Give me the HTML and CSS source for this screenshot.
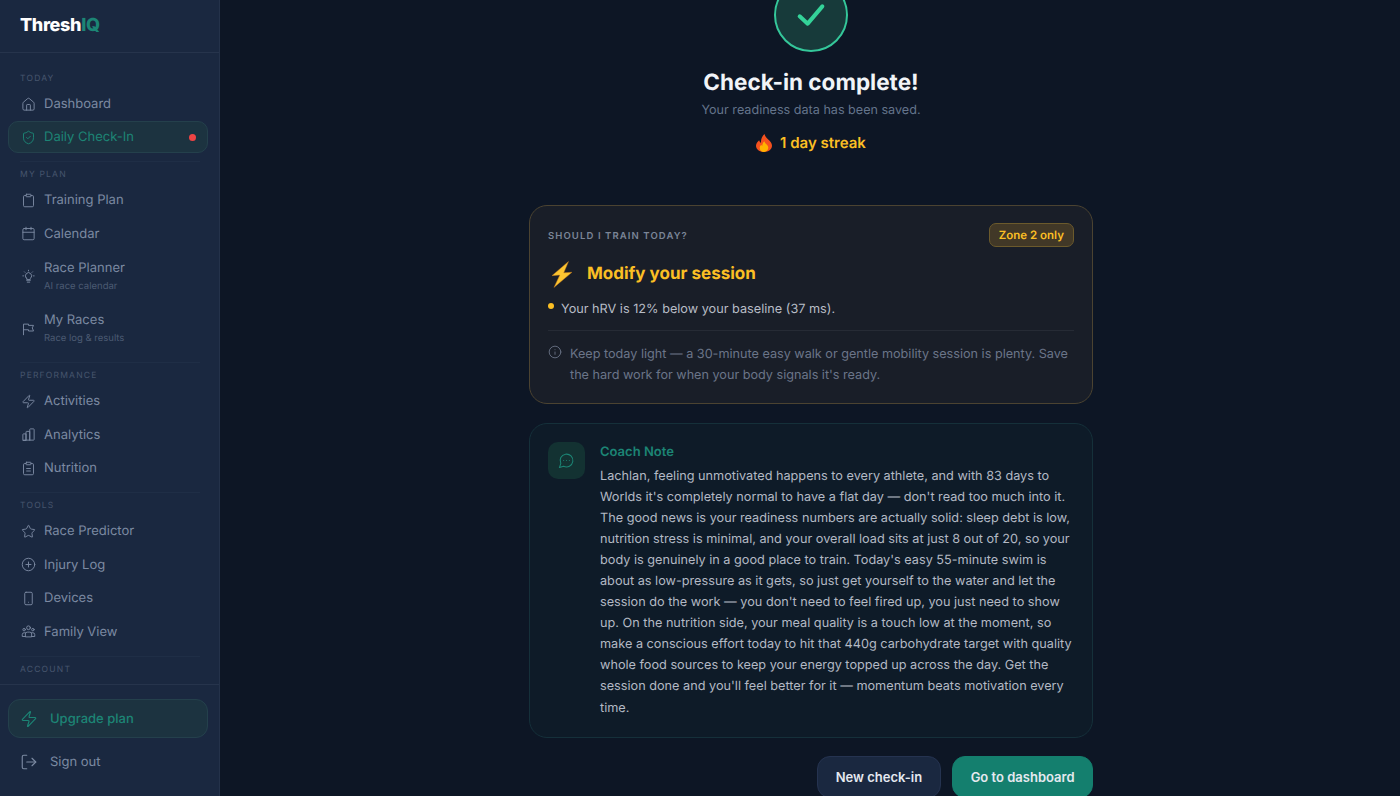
FILE: index.html

```html
<!DOCTYPE html>
<html lang="en">
<head>
  <meta charset="UTF-8" />
  <meta name="viewport" content="width=device-width, initial-scale=1" />
  <title>ThreshIQ - Daily Check-In</title>
  <link rel="stylesheet" href="styles.css">
</head>
<body>
  <div class="app">
    <aside class="sidebar">
      <div class="brand">Thresh<span>IQ</span></div>

      <nav class="nav">
        <div class="nav-section">
          <div class="nav-label">TODAY</div>
          <a class="nav-item">
            <svg class="icon" viewBox="0 0 24 24"><path d="M15 21v-8a1 1 0 0 0-1-1h-4a1 1 0 0 0-1 1v8"/><path d="M3 10a2 2 0 0 1 .709-1.528l7-5.999a2 2 0 0 1 2.582 0l7 5.999A2 2 0 0 1 21 10v9a2 2 0 0 1-2 2H5a2 2 0 0 1-2-2z"/></svg>
            <span>Dashboard</span>
          </a>
          <a class="nav-item active">
            <svg class="icon" viewBox="0 0 24 24"><path d="M20 13c0 5-3.5 7.5-7.66 8.95a1 1 0 0 1-.67-.01C7.5 20.5 4 18 4 13V6a1 1 0 0 1 1-1c2 0 4.5-1.2 6.24-2.72a1.17 1.17 0 0 1 1.52 0C14.51 3.81 17 5 19 5a1 1 0 0 1 1 1z"/><path d="m9 12 2 2 4-4"/></svg>
            <span>Daily Check-In</span>
            <i class="dot"></i>
          </a>
        </div>

        <div class="nav-section">
          <div class="nav-label">MY PLAN</div>
          <a class="nav-item">
            <svg class="icon" viewBox="0 0 24 24"><rect x="8" y="2" width="8" height="4" rx="1"/><path d="M16 4h2a2 2 0 0 1 2 2v14a2 2 0 0 1-2 2H6a2 2 0 0 1-2-2V6a2 2 0 0 1 2-2h2"/></svg>
            <span>Training Plan</span>
          </a>
          <a class="nav-item">
            <svg class="icon" viewBox="0 0 24 24"><path d="M8 2v4"/><path d="M16 2v4"/><rect x="3" y="4" width="18" height="18" rx="2"/><path d="M3 10h18"/></svg>
            <span>Calendar</span>
          </a>
          <a class="nav-item tall">
            <svg class="icon" viewBox="0 0 24 24"><path d="M9 18h6"/><path d="M10 21h4"/><path d="M8.500 14.500a5 5 0 1 1 7 0c-.7.7-1 1.400-1 2.500h-5c0-1.100-.3-1.800-1-2.500z"/><path d="M12 2v1"/><path d="M3 11h1"/><path d="M20 11h1"/><path d="m5.600 4.600.7.7"/><path d="m18.400 4.600-.7.7"/></svg>
            <span class="nav-text">Race Planner<small>AI race calendar</small></span>
          </a>
          <a class="nav-item tall">
            <svg class="icon" viewBox="0 0 24 24"><path d="M4 22V5h8v2h8l-2 4 2 5h-8v-2H4"/></svg>
            <span class="nav-text">My Races<small>Race log &amp; results</small></span>
          </a>
        </div>

        <div class="nav-section">
          <div class="nav-label">PERFORMANCE</div>
          <a class="nav-item">
            <svg class="icon" viewBox="0 0 24 24"><path d="M4 14a1 1 0 0 1-.78-1.630l9.900-10.200a.5.5 0 0 1 .86.46l-1.920 6.020A1 1 0 0 0 13 10h7a1 1 0 0 1 .78 1.630l-9.900 10.200a.5.5 0 0 1-.86-.46l1.920-6.020A1 1 0 0 0 11 14z"/></svg>
            <span>Activities</span>
          </a>
          <a class="nav-item">
            <svg class="icon" viewBox="0 0 24 24"><path d="M3 21v-9a1 1 0 0 1 1-1h4v10z"/><path d="M8 21V8a1 1 0 0 1 1-1h5v14"/><path d="M14 21V4a1 1 0 0 1 1-1h5a1 1 0 0 1 1 1v16a1 1 0 0 1-1 1H4"/></svg>
            <span>Analytics</span>
          </a>
          <a class="nav-item">
            <svg class="icon" viewBox="0 0 24 24"><rect x="8" y="2" width="8" height="4" rx="1"/><path d="M16 4h2a2 2 0 0 1 2 2v14a2 2 0 0 1-2 2H6a2 2 0 0 1-2-2V6a2 2 0 0 1 2-2h2"/><path d="M9 12h6"/><path d="M9 16h6"/></svg>
            <span>Nutrition</span>
          </a>
        </div>

        <div class="nav-section">
          <div class="nav-label">TOOLS</div>
          <a class="nav-item">
            <svg class="icon" viewBox="0 0 24 24"><path d="M11.525 2.295a.53.53 0 0 1 .95 0l2.310 4.679a2.123 2.123 0 0 0 1.595 1.160l5.166.756a.53.53 0 0 1 .294.904l-3.736 3.638a2.123 2.123 0 0 0-.611 1.878l.882 5.140a.53.53 0 0 1-.771.560l-4.618-2.428a2.122 2.122 0 0 0-1.973 0L6.396 21.010a.53.53 0 0 1-.77-.56l.881-5.139a2.122 2.122 0 0 0-.611-1.879L2.160 9.795a.53.53 0 0 1 .294-.906l5.165-.755a2.122 2.122 0 0 0 1.597-1.160z"/></svg>
            <span>Race Predictor</span>
          </a>
          <a class="nav-item">
            <svg class="icon" viewBox="0 0 24 24"><circle cx="12" cy="12" r="10"/><path d="M8 12h8"/><path d="M12 8v8"/></svg>
            <span>Injury Log</span>
          </a>
          <a class="nav-item">
            <svg class="icon" viewBox="0 0 24 24"><rect x="6" y="2" width="12" height="20" rx="2"/><path d="M12 18h.01"/></svg>
            <span>Devices</span>
          </a>
          <a class="nav-item">
            <svg class="icon" viewBox="0 0 24 24"><circle cx="12" cy="6" r="3"/><circle cx="5" cy="9" r="2"/><circle cx="19" cy="9" r="2"/><path d="M7 20v-4a3 3 0 0 1 3-3h4a3 3 0 0 1 3 3v4z"/><path d="M7 20H2v-3a3 3 0 0 1 3-3h2"/><path d="M17 20h5v-3a3 3 0 0 0-3-3h-2"/></svg>
            <span>Family View</span>
          </a>
        </div>

        <div class="nav-section">
          <div class="nav-label">ACCOUNT</div>
        </div>
      </nav>

      <div class="sidebar-foot">
        <a class="foot-btn upgrade">
          <svg class="icon big" viewBox="0 0 24 24"><path d="M4 14a1 1 0 0 1-.78-1.630l9.900-10.200a.5.5 0 0 1 .86.46l-1.920 6.020A1 1 0 0 0 13 10h7a1 1 0 0 1 .78 1.630l-9.900 10.200a.5.5 0 0 1-.86-.46l1.920-6.020A1 1 0 0 0 11 14z"/></svg>
          <span>Upgrade plan</span>
        </a>
        <a class="foot-btn">
          <svg class="icon big" viewBox="0 0 24 24"><path d="M9 21H5a2 2 0 0 1-2-2V5a2 2 0 0 1 2-2h4"/><path d="m16 17 5-5-5-5"/><path d="M21 12H9"/></svg>
          <span>Sign out</span>
        </a>
      </div>
    </aside>

    <main class="main">
      <div class="content">
        <div class="hero">
          <div class="tick">
            <svg viewBox="0 0 24 24"><path d="M3.500 13 9.500 18.500 20.500 5.500"/></svg>
          </div>
          <h1>Check-in complete!</h1>
          <p class="saved">Your readiness data has been saved.</p>
          <div class="streak">
            <svg class="flame" viewBox="4 1 16 22" preserveAspectRatio="none">
              <path fill="#f4511e" d="M12.500 1c.6 3.400 2.300 5 4 7 1.900 2.200 3.500 4.300 3.500 7.500 0 4.600-3.500 7.500-8 7.500s-8-2.900-8-7.500c0-3 1.400-5.300 3.200-7 .2 1.500.8 2.500 1.800 3.200C8.700 7.200 10.200 3.500 12.500 1z"/>
              <path fill="#ffb300" d="M12.300 10c.4 2 1.600 2.900 2.600 4.200.9 1.200 1.400 2.300 1.400 3.700 0 2.800-1.900 5.100-4.300 5.100s-4.300-2.200-4.300-5c0-1.600.7-2.800 1.600-3.800.2.700.5 1.200 1 1.600-.1-2.200.6-4.200 2-5.800z"/>
            </svg>
            <span>1 day streak</span>
          </div>
        </div>

        <section class="card verdict">
          <div class="verdict-top">
            <div class="eyebrow">SHOULD I TRAIN TODAY?</div>
            <div class="badge">Zone 2 only</div>
          </div>
          <div class="verdict-title">
            <svg class="bolt" viewBox="0 0 24 24">
              <path fill="#fbc531" stroke="#c9781a" stroke-width=".4" stroke-linejoin="round" d="M18.200.5 3.500 13l7-.5-5.200 11L21.300 10l-7.300.5z"/>
            </svg>
            <h2>Modify your session</h2>
          </div>
          <div class="reason">
            <i class="bullet"></i>
            <span>Your hRV is 12% below your baseline (37 ms).</span>
          </div>
          <div class="advice">
            <svg class="icon" viewBox="0 0 24 24"><circle cx="12" cy="12" r="10"/><path d="M12 16v-4"/><path d="M12 8h.01"/></svg>
            <p>Keep today light — a 30-minute easy walk or gentle mobility session is plenty. Save the hard work for when your body signals it's ready.</p>
          </div>
        </section>

        <section class="card coach">
          <div class="coach-icon">
            <svg class="icon" viewBox="0 0 24 24"><path d="M7.900 20A9 9 0 1 0 4 16.100L2 22Z"/><path d="M8 12h.01"/><path d="M12 12h.01"/><path d="M16 12h.01"/></svg>
          </div>
          <div class="coach-body">
            <h3>Coach Note</h3>
            <p>Lachlan, feeling unmotivated happens to every athlete, and with 83 days to Worlds it's completely normal to have a flat day — don't read too much into it. The good news is your readiness numbers are actually solid: sleep debt is low, nutrition stress is minimal, and your overall load sits at just 8 out of 20, so your body is genuinely in a good place to train. Today's easy 55-minute swim is about as low-pressure as it gets, so just get yourself to the water and let the session do the work — you don't need to feel fired up, you just need to show up. On the nutrition side, your meal quality is a touch low at the moment, so make a conscious effort today to hit that 440g carbohydrate target with quality whole food sources to keep your energy topped up across the day. Get the session done and you'll feel better for it — momentum beats motivation every time.</p>
          </div>
        </section>

        <div class="actions">
          <button class="btn">New check-in</button>
          <button class="btn primary">Go to dashboard</button>
        </div>
      </div>
    </main>
  </div>
</body>
</html>
```

FILE: styles.css

```css
* {
  box-sizing: border-box;
}
html, body {
  height: 100%;
  margin: 0;
  overflow: hidden;
}
body {
  font-family: Inter, "Noto Sans", sans-serif;
  text-rendering: geometricPrecision;
  background: #0d1625;
  color: #e5e9f0;
}
.app {
  display: flex;
  height: 796px;
}
.icon {
  width: 15px;
  height: 15px;
  flex: none;
  fill: none;
  stroke: currentColor;
  stroke-width: 1.500;
  stroke-linecap: round;
  stroke-linejoin: round;
}
.icon.big {
  width: 18px;
  height: 18px;
}

/* sidebar */
.sidebar {
  width: 220px;
  flex: none;
  display: flex;
  flex-direction: column;
  background: #1a2840;
  border-right: 1px solid #24324a;
}
.brand {
  height: 53px;
  flex: none;
  padding: 15px 20px 0;
  font-size: 18px;
  line-height: 22px;
  font-weight: 800;
  letter-spacing: -0.35px;
  color: #fff;
  border-bottom: 1px solid #26344c;
}
.brand span {
  color: #1c8575;
}
.nav {
  flex: 1;
  min-height: 0;
  overflow: hidden;
  padding: 20px 11px 0 8px;
}
.nav-section {
  margin-bottom: 8.250px;
}
.nav-section + .nav-section::before {
  content: "";
  display: block;
  height: 1px;
  margin: 0 8px 7px 12px;
  background: #1f2e46;
}
.nav-label {
  height: 12px;
  margin-bottom: 3px;
  padding-left: 12px;
  font-size: 8.500px;
  line-height: 12px;
  letter-spacing: 1.200px;
  color: #46556d;
}
.nav-item {
  display: flex;
  align-items: center;
  gap: 8.500px;
  height: 32px;
  margin-bottom: 1.500px;
  padding: 0 11.500px;
  border: 1px solid transparent;
  border-radius: 10px;
  font-size: 13px;
  color: #7c8aa2;
}
.nav-item.tall {
  height: 50.500px;
}
.nav-text {
  margin-top: -1px;
}
.nav-text small {
  display: block;
  margin-top: 5px;
  font-size: 9.500px;
  line-height: 12px;
  color: #4c5b73;
}
.nav-item.active {
  height: 32px;
  margin-top: -0.5px;
  margin-bottom: 3px;
  color: #1c8575;
  background: #1c3340;
  border-color: #24404c;
}
.dot {
  width: 7px;
  height: 7px;
  margin-left: auto;
  border-radius: 50%;
  background: #ef4444;
}
.sidebar-foot {
  flex: none;
  height: 112px;
  padding: 14px 11px 0 8px;
  border-top: 1px solid #26344c;
}
.foot-btn {
  display: flex;
  align-items: center;
  gap: 12px;
  height: 39px;
  padding: 0 11px;
  border: 1px solid transparent;
  border-radius: 12px;
  font-size: 13px;
  color: #7c8aa2;
}
.foot-btn + .foot-btn {
  margin-top: 4px;
}
.foot-btn.upgrade {
  color: #1c8575;
  font-weight: 500;
  background: #1c3340;
  border-color: #24404c;
}

/* main column */
.main {
  flex: 1;
  min-width: 0;
  overflow: hidden;
  padding-left: 2px;
}
.content {
  width: 564px;
  margin: -22px auto 0;
}
.hero {
  display: flex;
  flex-direction: column;
  align-items: center;
  margin-bottom: 52px;
}
.tick {
  display: flex;
  align-items: center;
  justify-content: center;
  width: 74px;
  height: 74px;
  border: 2px solid #34c79a;
  border-radius: 50%;
  background: #173a3a;
}
.tick svg {
  width: 32px;
  height: 32px;
  fill: none;
  stroke: #34d399;
  stroke-width: 3;
  stroke-linecap: round;
  stroke-linejoin: round;
}
.hero h1 {
  margin: 17px 0 0;
  font-size: 22.500px;
  line-height: 28px;
  font-weight: 700;
  color: #f1f4f8;
}
.saved {
  margin: 4px 0 0;
  font-size: 12.600px;
  line-height: 20px;
  color: #64748b;
}
.streak {
  display: flex;
  align-items: center;
  gap: 8px;
  margin-top: 12px;
  font-size: 15px;
  line-height: 20px;
  font-weight: 600;
  color: #fbbf24;
}
.flame {
  width: 16px;
  height: 18px;
}
.card {
  width: 564px;
  border-radius: 18px;
  border: 1px solid;
}
.verdict {
  height: 199px;
  padding: 17px 18px 0;
  background: #191e28;
  border-color: #4b4331;
}
.verdict-top {
  display: flex;
  align-items: center;
  justify-content: space-between;
}
.eyebrow {
  padding-top: 2px;
  font-size: 9.500px;
  font-weight: 600;
  letter-spacing: 1.100px;
  color: #7b8597;
}
.badge {
  height: 24px;
  padding: 0 9px;
  border: 1px solid #6b5a2c;
  border-radius: 7px;
  background: #413827;
  font-size: 11.500px;
  line-height: 22px;
  font-weight: 600;
  color: #fbbf24;
}
.verdict-title {
  display: flex;
  align-items: center;
  gap: 12px;
  margin-top: 14px;
}
.bolt {
  width: 27px;
  height: 27px;
  flex: none;
}
.verdict-title h2 {
  margin: 0;
  font-size: 17px;
  line-height: 27px;
  font-weight: 700;
  color: #fbbf24;
}
.reason {
  display: flex;
  gap: 7px;
  margin-top: 12px;
  font-size: 12.700px;
  line-height: 20px;
  color: #b8bdc6;
  padding-bottom: 10px;
  border-bottom: 1px solid #262b35;
}
.bullet {
  width: 6px;
  height: 6px;
  margin-top: 3px;
  flex: none;
  border-radius: 50%;
  background: #fbbf24;
}
.advice {
  display: flex;
  gap: 8px;
  margin-top: 13px;
  color: #6b7588;
}
.advice .icon {
  width: 14px;
  height: 14px;
  margin-top: 1px;
}
.advice p {
  margin: 0;
  font-size: 12.650px;
  line-height: 21.100px;
}
.coach {
  display: flex;
  gap: 15px;
  margin-top: 19px;
  height: 315px;
  padding: 18px;
  background: #0e1b28;
  border-color: #15303a;
}
.coach-icon {
  display: flex;
  align-items: center;
  justify-content: center;
  width: 37px;
  height: 37px;
  flex: none;
  border-radius: 10px;
  background: #133232;
  color: #1c8575;
}
.coach-icon .icon {
  width: 17px;
  height: 17px;
}
.coach-body h3 {
  margin: 0;
  font-size: 13px;
  line-height: 20px;
  font-weight: 600;
  color: #1c8575;
}
.coach-body p {
  margin: 3.500px 0 0;
  font-size: 12.700px;
  line-height: 21.100px;
  color: #b3b9c4;
}
.actions {
  display: flex;
  justify-content: flex-end;
  gap: 11px;
  margin-top: 18px;
}
.btn {
  height: 42px;
  padding: 0 18px;
  border: 1px solid #253350;
  border-radius: 13px;
  background: #1a2840;
  font-family: inherit;
  font-size: 13px;
  font-weight: 600;
  color: #e5e9f0;
}
.btn.primary {
  padding: 0 17.500px;
  border-color: #147f6e;
  background: #147f6e;
}
```
